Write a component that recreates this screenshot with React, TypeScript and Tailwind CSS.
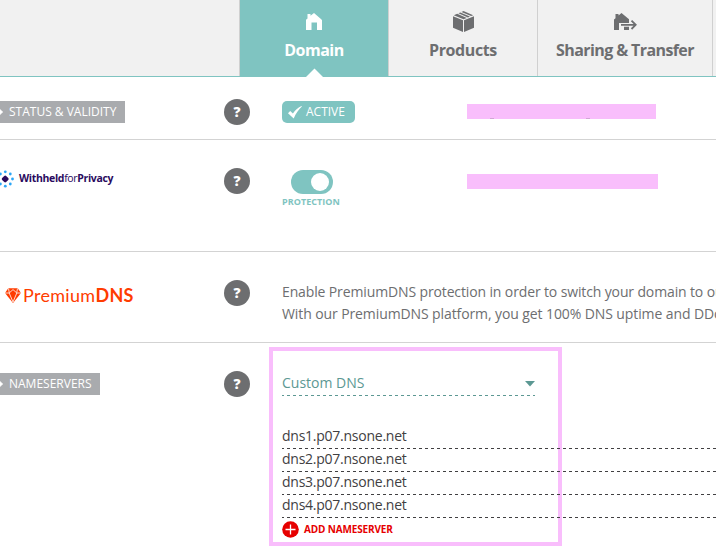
import type { ReactNode } from "react";

function House() {
  return (
    <svg width="16" height="17" viewBox="0 0 16 17" fill="currentColor">
      <path d="M0 6.800 1.500 5.400V1h3v1.700L8 0l7.500 6.400.5.800V17h-5V9.500H5.500V17H0z" />
    </svg>
  );
}

function Box() {
  return (
    <svg width="21" height="21" viewBox="0 0 21 21" fill="currentColor">
      <path d="M0 5.200 10 9.200V21L0 16.800zM21 5.200 11 9.200V21l10-4.200zM.8 4.200l3.400-1.400 9.600 4.100-3.300 1.400zM5.400 2.300l1.900-.8 9.600 4.100-1.900.8zM8.500 1l2-.9 9.700 4.100-2.100.9z" />
    </svg>
  );
}

function HouseArrow() {
  return (
    <svg width="23" height="17" viewBox="0 0 23 17" fill="currentColor">
      <path d="M0 6.500 1.500 5.200V1h3v1.500L7.500 0 15 6.200V10H5v7H0zM10 13.800h5V17h-5z" />
      <path d="M7 11.800h15M17.500 7.600l4.200 4.200-4.200 4.200" fill="none" stroke="currentColor" strokeWidth="1.800" />
    </svg>
  );
}

function Tab({ label, icon, className }: { label: string; icon: ReactNode; className: string }) {
  return (
    <div className={"relative flex shrink-0 flex-col items-center border-r border-[#d0d0d0] " + className}>
      <div className="flex h-[33px] items-end justify-center">{icon}</div>
      <div className="mt-[6px] whitespace-nowrap text-[16px] leading-[22px] font-bold">{label}</div>
    </div>
  );
}

function Help() {
  return (
    <div className="flex size-[26px] shrink-0 items-center justify-center rounded-full bg-[#6d6e70] text-[14px] leading-none font-extrabold text-white">
      ?
    </div>
  );
}

function Tag({ text, className }: { text: string; className: string }) {
  return (
    <div className={"flex h-[22px] items-center bg-[#a9abae] whitespace-nowrap text-[12px] text-white " + className}>
      <svg className="mr-[6px]" width="3" height="6" viewBox="0 0 3 6" fill="currentColor">
        <path d="M0 .5 2.800 3 0 5.500z" stroke="currentColor" strokeWidth=".6" />
      </svg>
      {text}
    </div>
  );
}

function PrivacyMark() {
  return (
    <svg width="14" height="18" viewBox="0 0 14 18">
      <rect x="2.400" y="6.200" width="5.600" height="5.600" rx="1.300" transform="rotate(45 5.200 9)" fill="#2a0a5e" />
      <g fill="#2ba6f7">
        <circle cx="5.300" cy="1.800" r="1.400" />
        <circle cx="10.300" cy="4" r="1.400" />
        <circle cx="12.500" cy="9" r="1.400" />
        <circle cx="10.300" cy="14" r="1.400" />
        <circle cx="5.300" cy="16.200" r="1.400" />
        <circle cx="0.400" cy="4" r="1.400" />
        <circle cx="0.400" cy="14" r="1.400" />
      </g>
    </svg>
  );
}

function Diamond() {
  return (
    <svg width="16" height="15" viewBox="0 0 16 15">
      <path d="M3.300.2h9.400L16 5 8 15 0 5z" fill="#ff3c00" />
      <path d="M0 5h4.200L8 1.600 11.800 5H16M4.200 5 8 14M11.800 5 8 14M3.500.5l.8 4.300M12.500.5l-.8 4.300" fill="none" stroke="#fff" strokeWidth=".8" />
    </svg>
  );
}

const servers = ["dns1.p07.nsone.net", "dns2.p07.nsone.net", "dns3.p07.nsone.net", "dns4.p07.nsone.net"];

export default function App() {
  return (
    <div className="h-[546px] w-[716px] overflow-hidden bg-white font-['Open_Sans',sans-serif] text-[#6d6e70]">
      <header className="flex h-[77px] border-b border-[#7fc4c1] bg-[#f1f1f1]">
        <div className="w-[240px] shrink-0 border-r border-[#d0d0d0]" />
        <Tab
          label="Domain"
          className="w-[149px] bg-[#7fc4c1] tracking-[-0.5px] text-white"
          icon={
            <>
              <div className="mb-[3px]"><House /></div>
              <svg className="absolute bottom-[-1px] left-[66px]" width="17" height="9" viewBox="0 0 17 9">
                <path d="M0 9 8.500.5 17 9z" fill="#fff" />
              </svg>
            </>
          }
        />
        <Tab label="Products" className="w-[149px] tracking-[-0.4px]" icon={<div className="mb-px"><Box /></div>} />
        <Tab label="Sharing & Transfer" className="w-[175px] tracking-[-0.600px]" icon={<div className="mb-[3px]"><HouseArrow /></div>} />
      </header>

      <section className="flex h-[63px] border-b border-[#d3d3d3]">
        <div className="w-[224px] shrink-0 pt-[24px]"><Tag text="STATUS & VALIDITY" className="w-[125px]" /></div>
        <div className="w-[58px] shrink-0 pt-[22px]"><Help /></div>
        <div className="w-[185px] shrink-0 pt-[24px]">
          <div className="flex h-[22px] w-[73px] items-center rounded-[5px] bg-[#7fc4c1] pl-[6px] text-[12px] text-white">
            <svg className="mr-[4px] shrink-0" width="14" height="13" viewBox="0 0 14 13">
              <path d="M0 7.300 2.200 5l2.700 2.600C7 4.400 9.700 1.700 13.400 0l.5.6C10.500 3.700 8 7.500 5.700 12.500z" fill="currentColor" />
            </svg>
            ACTIVE
          </div>
        </div>
        <div className="mt-[27px] flex h-[15px] w-[189px] items-end bg-[#f9befc] pl-[23px]">
          <i className="h-px w-[4px] bg-[#d2a5d6]" />
          <i className="ml-[92px] h-px w-[4px] bg-[#d2a5d6]" />
        </div>
      </section>

      <section className="flex h-[112px] border-b border-[#d3d3d3]">
        <div className="flex h-[78px] w-[224px] shrink-0 items-center">
          <PrivacyMark />
          <span className="ml-[5px] whitespace-nowrap text-[10.500px] tracking-[-0.330px] font-bold text-[#2a0a5e]">
            Withheld<span className="font-normal">for</span>Privacy
          </span>
        </div>
        <div className="w-[58px] shrink-0 pt-[28px]"><Help /></div>
        <div className="w-[185px] shrink-0 pt-[30px]">
          <div className="ml-[9px] flex h-[24px] w-[42px] items-center justify-end rounded-full bg-[#7fc4c1] pr-[4px]">
            <div className="size-[18px] rounded-full bg-white" />
          </div>
          <div className="mt-[2px] whitespace-nowrap text-[9px] leading-[12px] font-bold tracking-[0.050px] text-[#7fc4c1]">PROTECTION</div>
        </div>
        <div className="mt-[34px] h-[15px] w-[191px] bg-[#f9befc]" />
      </section>

      <section className="flex h-[91px] border-b border-[#d3d3d3]">
        <div className="flex h-[86px] w-[224px] shrink-0 items-center pl-[5px] text-[#ff3c00]">
          <Diamond />
          <span className="ml-[2px] font-[Lato] text-[18px] tracking-[0.300px] whitespace-nowrap">Premium<b>DNS</b></span>
        </div>
        <div className="w-[58px] shrink-0 pt-[28px]"><Help /></div>
        <div className="pt-[29px] text-[14px] leading-[22px] whitespace-nowrap">
          <p className="tracking-[-0.130px]">Enable PremiumDNS protection in order to switch your domain to our</p>
          <p className="tracking-[-0.100px]">With our PremiumDNS platform, you get 100% DNS uptime and DDoS</p>
        </div>
      </section>

      <section className="relative flex h-[203px]">
        <div className="absolute top-[4px] left-[269px] h-[199px] w-[293px] border-4 border-[#f9befc]" />
        <div className="w-[224px] shrink-0 pt-[30px]"><Tag text="NAMESERVERS" className="w-[100px]" /></div>
        <div className="w-[58px] shrink-0 pt-[28px]"><Help /></div>
        <div className="relative w-[434px] shrink-0 pt-[28px]">
          <div className="w-[253px] text-[14px] text-[#5c9893]">
            <div className="flex h-[24px] items-center justify-between">
              <span className="pb-px">Custom DNS</span>
              <svg className="mt-[2px]" width="10" height="6" viewBox="0 0 10 6"><path d="M0 0h10L5 5.500z" fill="currentColor" /></svg>
            </div>
            <div className="h-px bg-[repeating-linear-gradient(90deg,#5c9893_0_2px,transparent_2px_5px,#5c9893_5px_6px)]" />
          </div>
          <ul className="pt-[30px]">
            {servers.map((host) => (
              <li key={host} className="text-[14px] leading-[20px] tracking-[-0.250px] text-[#414042]">
                <div className="h-[22px]">{host}</div>
                <div className="h-px bg-[repeating-linear-gradient(90deg,#414042_0_2px,transparent_2px_5px,#414042_5px_6px)]" />
              </li>
            ))}
          </ul>
          <div className="mt-[3px] flex items-center text-[10px] leading-[17px] font-bold tracking-[-0.150px] text-[#e60000]">
            <svg className="mr-[5px]" width="17" height="17" viewBox="0 0 17 17">
              <circle cx="8.500" cy="8.500" r="8.300" fill="currentColor" />
              <path d="M8.500 3.500v10M3.500 8.500h10" stroke="#fff" strokeWidth="1.300" />
            </svg>
            ADD NAMESERVER
          </div>
        </div>
      </section>
    </div>
  );
}
